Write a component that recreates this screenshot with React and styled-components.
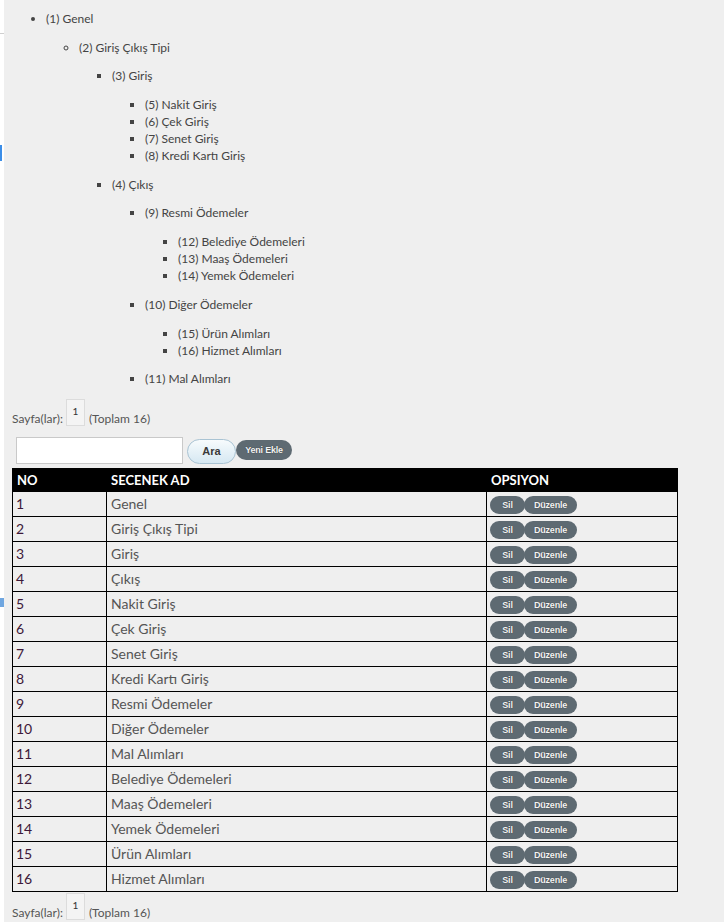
import React from 'react';
import styled, { createGlobalStyle } from 'styled-components';

const GlobalStyle = createGlobalStyle`
  html, body {
    margin: 0;
    padding: 0;
    background: #efefef;
  }
  body {
    font-family: Lato, "Liberation Sans", Arial, sans-serif;
    color: #444;
  }
`;

const Page = styled.div`
  display: flex;
  min-height: 922px;
`;

const Strip = styled.div`
  width: 4px;
  flex: none;
  background: #fff;
  display: flex;
  flex-direction: column;
`;

const StripMark = styled.div`
  margin-top: ${(p) => p.top}px;
  width: ${(p) => p.w}px;
  height: ${(p) => p.h}px;
  background: ${(p) => p.color};
`;

const Main = styled.div`
  flex: 1;
  padding: 0 8px;
`;

const TreeList = styled.ul`
  margin: ${(p) => (p.root ? '10px 0 11.7px' : '11.7px 0')};
  padding-left: ${(p) => (p.root ? '34px' : '33px')};
  font-size: 12px;
  line-height: 17px;
  color: #444;
  list-style-type: ${(p) => p.bullet};
`;

const Pager = styled.div`
  display: flex;
  align-items: flex-end;
  font-size: 12px;
  color: #555;
  line-height: 15px;
  margin-top: ${(p) => p.top}px;
`;

const PageBox = styled.span`
  box-sizing: border-box;
  width: 19px;
  height: 27px;
  margin: 0 4px 0 3px;
  border: 1px solid #dcdcdc;
  background: #f4f4f4;
  font-size: 10px;
  line-height: 12px;
  text-align: center;
  padding-top: 5px;
  color: #333;
`;

const SearchRow = styled.div`
  display: flex;
  align-items: center;
  margin: 11px 0 4px;
  padding-left: 4px;
`;

const SearchInput = styled.input`
  box-sizing: border-box;
  width: 167px;
  height: 27px;
  border: 1px solid #c9c9c9;
  background: #fff;
  margin: 0 4px 0 0;
  padding: 2px 6px;
  font-size: 12px;
  outline: none;
`;

const AraButton = styled.button`
  box-sizing: border-box;
  width: 49px;
  height: 25px;
  border: 1px solid #a9c3d3;
  border-radius: 13px;
  background: linear-gradient(#f7fbfd, #d6e8f2);
  font-family: "Liberation Sans", Arial, sans-serif;
  font-weight: bold;
  font-size: 11px;
  color: #3a3a3a;
  padding: 0;
  align-self: flex-end;
  cursor: pointer;
`;

const DarkButton = styled.button`
  box-sizing: border-box;
  width: ${(p) => p.w}px;
  height: ${(p) => p.h}px;
  border: none;
  border-radius: ${(p) => p.h / 2}px;
  background: #5e6a72;
  color: #f4f4f4;
  font-family: "Liberation Sans", Arial, sans-serif;
  font-weight: bold;
  font-size: 9px;
  letter-spacing: -0.2px;
  text-shadow: 0 0 1px rgba(0, 0, 0, 0.6);
  padding: 0;
  margin-right: ${(p) => p.gap || 0}px;
  cursor: pointer;
  vertical-align: middle;
`;

const Table = styled.table`
  width: 666px;
  table-layout: fixed;
  border-collapse: collapse;
  border: 1px solid #000;
`;

const HeadCell = styled.th`
  background: #000;
  color: #fff;
  font-size: 13px;
  font-weight: bold;
  text-align: left;
  height: 22px;
  padding: 0 4px;
  border: 1px solid #000;
  width: ${(p) => (p.w ? `${p.w}px` : 'auto')};
`;

const Cell = styled.td`
  height: 24px;
  padding: 0 ${(p) => (p.pad !== undefined ? p.pad : 4)}px;
  border: 1px solid #000;
  font-size: 14px;
  color: ${(p) => p.color || '#555'};
  vertical-align: middle;
  white-space: nowrap;
`;

const tree = [
  { id: 1, name: 'Genel', children: [
    { id: 2, name: 'Giriş Çıkış Tipi', children: [
      { id: 3, name: 'Giriş', children: [
        { id: 5, name: 'Nakit Giriş' },
        { id: 6, name: 'Çek Giriş' },
        { id: 7, name: 'Senet Giriş' },
        { id: 8, name: 'Kredi Kartı Giriş' },
      ] },
      { id: 4, name: 'Çıkış', children: [
        { id: 9, name: 'Resmi Ödemeler', children: [
          { id: 12, name: 'Belediye Ödemeleri' },
          { id: 13, name: 'Maaş Ödemeleri' },
          { id: 14, name: 'Yemek Ödemeleri' },
        ] },
        { id: 10, name: 'Diğer Ödemeler', children: [
          { id: 15, name: 'Ürün Alımları' },
          { id: 16, name: 'Hizmet Alımları' },
        ] },
        { id: 11, name: 'Mal Alımları' },
      ] },
    ] },
  ] },
];

const rows = [
  'Genel', 'Giriş Çıkış Tipi', 'Giriş', 'Çıkış', 'Nakit Giriş', 'Çek Giriş',
  'Senet Giriş', 'Kredi Kartı Giriş', 'Resmi Ödemeler', 'Diğer Ödemeler',
  'Mal Alımları', 'Belediye Ödemeleri', 'Maaş Ödemeleri', 'Yemek Ödemeleri',
  'Ürün Alımları', 'Hizmet Alımları',
];

const bullets = ['disc', 'circle', 'square'];

function Tree({ items, level }) {
  return (
    <TreeList root={level === 0} bullet={bullets[Math.min(level, 2)]}>
      {items.map((item) => (
        <li key={item.id}>
          ({item.id}) {item.name}
          {item.children && <Tree items={item.children} level={level + 1} />}
        </li>
      ))}
    </TreeList>
  );
}

function Pagination({ top }) {
  return (
    <Pager top={top}>
      <span>Sayfa(lar):</span>
      <PageBox>1</PageBox>
      <span>(Toplam 16)</span>
    </Pager>
  );
}

export default function App() {
  return (
    <>
      <GlobalStyle />
      <Page>
        <Strip>
          <StripMark top={33} w={4} h={1} color="#cfcfcf" />
          <StripMark top={111} w={2} h={16} color="#3b8ee8" />
          <StripMark top={437} w={4} h={9} color="#6fa6e0" />
        </Strip>
        <Main>
          <Tree items={tree} level={0} />
          <Pagination top={0} />
          <SearchRow>
            <SearchInput type="text" />
            <AraButton>Ara</AraButton>
            <DarkButton w={56} h={20}>Yeni Ekle</DarkButton>
          </SearchRow>
          <Table>
            <thead>
              <tr>
                <HeadCell w={85}>NO</HeadCell>
                <HeadCell w={371}>SECENEK AD</HeadCell>
                <HeadCell>OPSIYON</HeadCell>
              </tr>
            </thead>
            <tbody>
              {rows.map((name, i) => (
                <tr key={name}>
                  <Cell pad={3} color="#3d1838">{i + 1}</Cell>
                  <Cell>{name}</Cell>
                  <Cell pad={3}>
                    <DarkButton w={35} h={18} gap={-1}>Sil</DarkButton>
                    <DarkButton w={53} h={18}>Düzenle</DarkButton>
                  </Cell>
                </tr>
              ))}
            </tbody>
          </Table>
          <Pagination top={1} />
        </Main>
      </Page>
    </>
  );
}
